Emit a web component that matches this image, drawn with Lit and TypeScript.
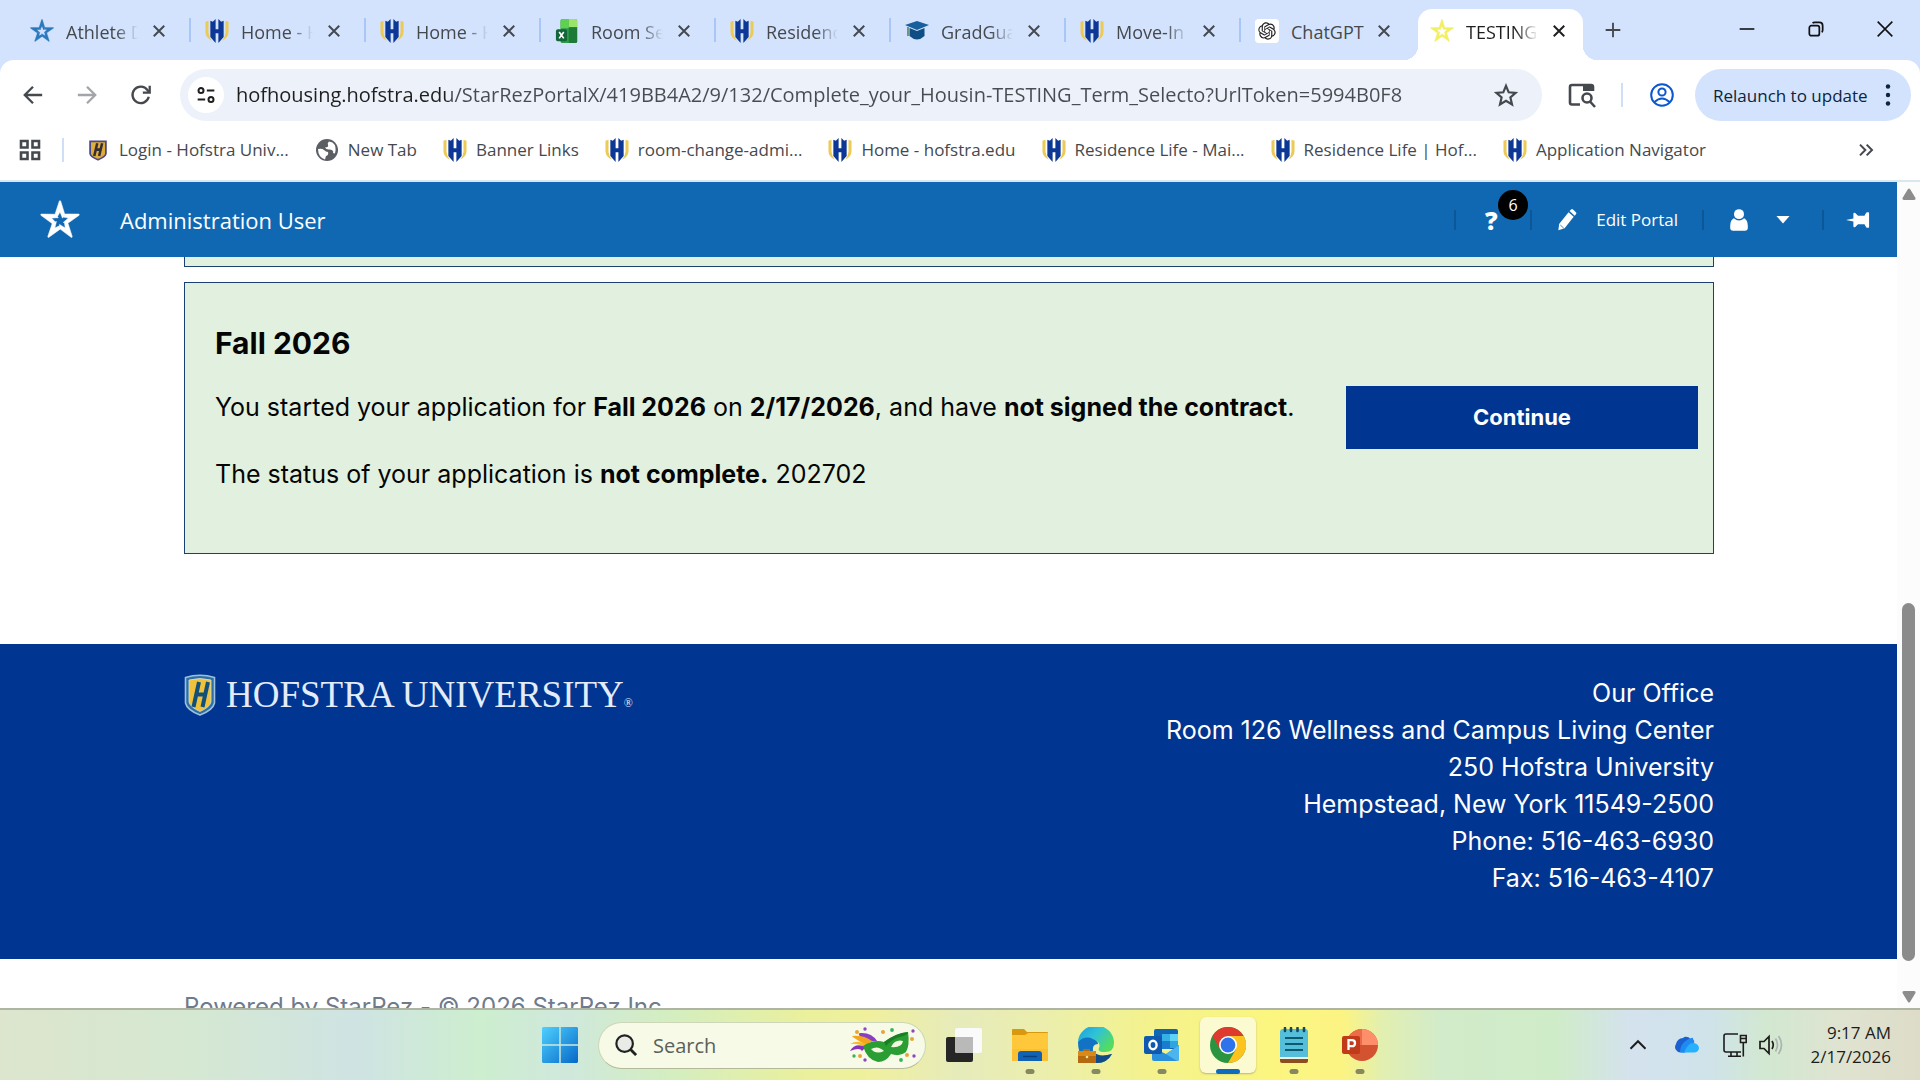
import { LitElement, html, css, svg, nothing, TemplateResult } from "lit";
import { customElement, property } from "lit/decorators.js";

/* ---------- icons ---------- */

const starArm = "M11.6 .6Q12 0 12.400 .6L14.900 8.700 13.500 10.900 12 7.200 10.500 9.900 9 8.500Z";
const star = svg`${[0, 72, 144, 216, 288].map(
  (a) => svg`<path d=${starArm} transform="rotate(${a} 12 12.5)"></path>`
)}`;

const icons: Record<string, () => TemplateResult> = {
  star: () => html`<svg viewBox="0 0 24 24" fill="currentColor" stroke="currentColor" stroke-width=".3">${star}</svg>`,
  hofstra: () => html`<svg viewBox="0 0 26 26">
    <path d="M.5 3 3.800 2V15Q4 19 7.500 23.500 .5 20 .5 14ZM25.500 3 22.200 2V15Q22 19 18.500 23.500 25.500 20 25.500 14Z" fill="#ecca58"></path>
    <path d="M5.800 2 8.500 3 11.500 0V11H14.500V0L17.500 3 20.200 2V19.500L14.500 26V15.500H11.500V26L5.800 19.500Z" fill="#0c3795"></path>
  </svg>`,
  excel: () => html`<svg viewBox="0 0 24 26">
    <rect x="5" y="0" width="18" height="26" rx="2" fill="#2f9a44"></rect>
    <path d="M7 0H14V10H5V2Q5 0 7 0Z" fill="#5fd152"></path><path d="M14 0H21Q23 0 23 2V9H14Z" fill="#9be46a"></path>
    <path d="M14 9H23V24Q23 26 21 26H14Z" fill="#1e7a39"></path>
    <rect x="0" y="11" width="12" height="13" rx="2" fill="#12663a"></rect>
    <path d="M3.5 14 8.5 21M8.5 14 3.5 21" stroke="#fff" stroke-width="1.8"></path>
  </svg>`,
  cap: () => html`<svg viewBox="0 0 24 24">
    <path d="M0 6 12 2 24 6 12 11Z" fill="#17609b"></path>
    <path d="M4.500 9V17Q12 24 19.500 17V9L12 12Z" fill="#0f4d85"></path>
    <path d="M3 8V17" stroke="#5d7f6b" stroke-width="1.600"></path>
  </svg>`,
  gpt: () => html`<svg viewBox="-4.500 -4.500 33 33">
    <rect x="-4.500" y="-4.500" width="33" height="33" rx="5" fill="#fff"></rect>
    <path fill="#222" d="M22.2819 9.8211a5.9847 5.9847 0 0 0-.5157-4.9108 6.0462 6.0462 0 0 0-6.5098-2.9A6.0651 6.0651 0 0 0 4.9807 4.1818a5.9847 5.9847 0 0 0-3.9977 2.9 6.0462 6.0462 0 0 0 .7427 7.0966 5.98 5.98 0 0 0 .511 4.9107 6.051 6.051 0 0 0 6.5146 2.9001A5.9847 5.9847 0 0 0 13.2599 24a6.0557 6.0557 0 0 0 5.7718-4.2058 5.9894 5.9894 0 0 0 3.9977-2.9001 6.0557 6.0557 0 0 0-.7475-7.0729zm-9.022 12.6081a4.4755 4.4755 0 0 1-2.8764-1.0408l.1419-.0804 4.7783-2.7582a.7948.7948 0 0 0 .3927-.6813v-6.7369l2.02 1.1686a.071.071 0 0 1 .038.052v5.5826a4.504 4.504 0 0 1-4.4945 4.4944zm-9.6607-4.1254a4.4708 4.4708 0 0 1-.5346-3.0137l.142.0852 4.783 2.7582a.7712.7712 0 0 0 .7806 0l5.8428-3.3685v2.3324a.0804.0804 0 0 1-.0332.0615L9.74 19.9502a4.4992 4.4992 0 0 1-6.1408-1.6464zM2.3408 7.8956a4.485 4.485 0 0 1 2.3655-1.9728V11.6a.7664.7664 0 0 0 .3879.6765l5.8144 3.3543-2.0201 1.1685a.0757.0757 0 0 1-.071 0l-4.8303-2.7865A4.504 4.504 0 0 1 2.3408 7.872zm16.5963 3.8558L13.1038 8.364 15.1192 7.2a.0757.0757 0 0 1 .071 0l4.8303 2.7913a4.4944 4.4944 0 0 1-.6765 8.1042v-5.6772a.79.79 0 0 0-.407-.667zm2.0107-3.0231l-.142-.0852-4.7735-2.7818a.7759.7759 0 0 0-.7854 0L9.409 9.2297V6.8974a.0662.0662 0 0 1 .0284-.0615l4.8303-2.7866a4.4992 4.4992 0 0 1 6.6802 4.66zM8.3065 12.863l-2.02-1.1638a.0804.0804 0 0 1-.038-.0567V6.0742a4.4992 4.4992 0 0 1 7.3757-3.4537l-.142.0805L8.704 5.459a.7948.7948 0 0 0-.3927.6813zm1.0976-2.3654l2.602-1.4998 2.6069 1.4998v2.9994l-2.5974 1.4997-2.6067-1.4997Z"></path>
  </svg>`,
  close: () => html`<svg viewBox="0 0 24 24" fill="none" stroke="currentColor" stroke-width="2.600"><path d="M5 5 19 19M19 5 5 19"></path></svg>`,
  plus: () => html`<svg viewBox="0 0 24 24" fill="none" stroke="currentColor" stroke-width="2.800"><path d="M12 1V23M1 12H23"></path></svg>`,
  minimise: () => html`<svg viewBox="0 0 24 24" fill="none" stroke="currentColor" stroke-width="2.400"><path d="M1 12H23"></path></svg>`,
  restore: () => html`<svg viewBox="0 0 24 24" fill="none" stroke="currentColor" stroke-width="2.600"><rect x="2" y="7" width="15" height="15" rx="3"></rect><path d="M7 3.500Q8 2 10 2H17Q22 2 22 7V14Q22 16 20.500 17"></path></svg>`,
  winClose: () => html`<svg viewBox="0 0 24 24" fill="none" stroke="currentColor" stroke-width="2.400"><path d="M1 1 23 23M23 1 1 23"></path></svg>`,
  back: () => html`<svg viewBox="0 0 24 24" fill="none" stroke="currentColor" stroke-width="2.500"><path d="M22 12H3M12 3 3 12 12 21"></path></svg>`,
  forward: () => html`<svg viewBox="0 0 24 24" fill="none" stroke="currentColor" stroke-width="2.500"><path d="M2 12H21M12 3 21 12 12 21"></path></svg>`,
  reload: () => html`<svg viewBox="0 0 24 24" fill="none" stroke="currentColor" stroke-width="2.500"><path d="M20.500 14A9 9 0 1 1 19 6.500L21 9"></path><path d="M21.500 2V9.500H14"></path></svg>`,
  tune: () => html`<svg viewBox="0 0 24 24" fill="none" stroke="currentColor" stroke-width="2.400"><circle cx="6" cy="6.500" r="3"></circle><path d="M13 6.500H22M2 17.500H11"></path><circle cx="18" cy="17.500" r="3"></circle></svg>`,
  bookmark: () => html`<svg viewBox="0 0 24 24" fill="none" stroke="currentColor" stroke-width="2.200"><path d="M12 2.800 14.700 9.300 21.700 9.900 16.400 14.500 18 21.400 12 17.700 6 21.400 7.600 14.500 2.300 9.900 9.300 9.300Z"></path></svg>`,
  pageSearch: () => html`<svg viewBox="0 0 28 26" fill="none" stroke="currentColor" stroke-width="2.600"><path d="M12 22.500H4Q2 22.500 2 20.500V5Q2 3 4 3H23Q25 3 25 5V9"></path><path d="M15 3H26V9H15Z" fill="currentColor" stroke="none"></path><circle cx="19" cy="16" r="4.500"></circle><path d="M22 19.500 27 25"></path></svg>`,
  profile: () => html`<svg viewBox="0 0 24 24" fill="none" stroke="currentColor" stroke-width="2"><circle cx="12" cy="12" r="10.800"></circle><circle cx="12" cy="9" r="3.600"></circle><path d="M4.500 19Q12 12 19.500 19"></path></svg>`,
  dots: () => html`<svg viewBox="0 0 6 24" fill="currentColor"><circle cx="3" cy="3.500" r="2.200"></circle><circle cx="3" cy="12" r="2.200"></circle><circle cx="3" cy="20.500" r="2.200"></circle></svg>`,
  apps: () => html`<svg viewBox="0 0 24 24" fill="none" stroke="currentColor" stroke-width="2.600"><path d="M3 3H9.500V9.500H3ZM14.500 3H21V9.500H14.500ZM3 14.500H9.500V21H3ZM14.500 14.500H21V21H14.500Z"></path></svg>`,
  shield: () => html`<svg viewBox="-2 -2 28 32">
    <path d="M1.500 2.500H22.500V19Q22 23 12 27 2 23 1.500 19Z" fill="#e0ae3a" stroke="#4b4a86" stroke-width="2.400"></path>
    <path d="M11 5 7 22M17.500 5 13.500 22M9 13.500H16" stroke="#352f35" stroke-width="3.400"></path>
  </svg>`,
  globe: () => html`<svg viewBox="0 0 24 24"><circle cx="12" cy="12" r="11" fill="#5b5f64"></circle>
    <path d="M3 11Q7 10 9 12T13 14Q14 17 11 18L10 21.500Q3 19 3 11ZM14 3.500Q12 5 13 7T10 9.500Q11 12 15 11.500 19 12 18 15L20 15.500Q22 8 17.500 4.500Z" fill="#fff"></path></svg>`,
  chevrons: () => html`<svg viewBox="0 0 24 24" fill="none" stroke="currentColor" stroke-width="3"><path d="M3 4 11 12 3 20M13 4 21 12 13 20"></path></svg>`,
  pencil: () => html`<svg viewBox="0 0 24 28" fill="currentColor"><path d="M1 27 2 19 14 4 20.500 10 9 24.500ZM15.300 2.600 17.200 .600Q18.500-.500 20 .800L23.300 4Q24.500 5.300 23.400 6.800L21.800 8.600Z"></path><path d="M3.500 20.500 8 24.500" stroke="#1168b2" stroke-width="1"></path></svg>`,
  user: () => html`<svg viewBox="0 0 24 30" fill="currentColor"><circle cx="12" cy="7" r="6.800"></circle><path d="M5 12.500Q12 19 19 12.500 24 15 24 23V26Q24 29.500 20 29.500H4Q0 29.500 0 26V23Q0 15 5 12.500Z"></path></svg>`,
  caret: () => html`<svg viewBox="0 0 16 10" fill="currentColor"><path d="M.500 .500H15.500L8 9Z"></path></svg>`,
  pin: () => html`<svg viewBox="0 0 26 20" fill="currentColor"><path d="M0 10 8 8.500V3.500Q8 1.500 10 2.500L13 5.500H20L22 2Q23.500 1 25 2V18Q23.500 19 22 18L20 14.500H13L10 17.500Q8 18.500 8 16.500V11.500Z"></path></svg>`,
  crest: () => html`<svg viewBox="0 0 32 42">
    <path d="M1.500 3.500Q16-1 30.500 3.500V29Q29 36 16 41 3 36 1.500 29Z" fill="#2d6fa3" stroke="#9cc0dd" stroke-width="1.600"></path>
    <path d="M5 6Q16 3 27 6V28Q26 33 16 37.500 6 33 5 28Z" fill="#f0c23c" stroke="#cfe0ea" stroke-width=".800"></path>
    <path d="M15 8 9.500 33M24 8 18.500 33M12 20.500H21.500" stroke="#12507c" stroke-width="4"></path>
  </svg>`,
  windows: () => html`<svg viewBox="0 0 35 35"><defs><linearGradient id="w" x1="0" y1="0" x2="1" y2="1"><stop offset="0" stop-color="#4fd0ff"></stop><stop offset="1" stop-color="#0669c8"></stop></linearGradient></defs>
    <path d="M1 0H16.800V16.800H0V1ZM18.200 0H34L35 1V16.800H18.200ZM0 18.200H16.800V35H1L0 34ZM18.200 18.200H35V34L34 35H18.200Z" fill="url(#w)"></path></svg>`,
  search: () => html`<svg viewBox="0 0 24 24" fill="#e8ebe6" stroke="#222" stroke-width="2.400"><circle cx="10.500" cy="10.500" r="9"></circle><path d="M17 17 23 23" stroke-width="3"></path></svg>`,
  mask: () => html`<svg viewBox="0 0 66 36">
    <path d="M16 15Q4 5 12 6 22 6 27 14Z" fill="#8a3fc0"></path><path d="M16 18Q2 10 2 9 14 8 22 14Z" fill="#f3a51d"></path>
    <path d="M18 18Q8 12 0 17 10 16 18 22Z" fill="#f7b92c"></path><path d="M16 20Q5 15 0 24 10 20 12 24Z" fill="#8a32bb"></path>
    <path d="M13 19Q24 12 34 15 46 6 58 5 60 18 56 25 50 30 41 27 36 35 28 35 17 33 13 19Z" fill="#2a9e33"></path>
    <path d="M34 15Q46 6 58 5 58 8 50 10 42 12 36 19Z" fill="#187f25"></path>
    <path d="M21 22Q28 18 34 24 26 28 21 22ZM41 20Q45 12 53 14 52 21 41 20Z" fill="#f4f7df"></path>
    <g fill="#8a49c0"><circle cx="15" cy="2" r="1.700"></circle><circle cx="63" cy="4" r="1.700"></circle><circle cx="15" cy="33" r="1.700"></circle><circle cx="64" cy="29" r="1.700"></circle></g>
    <g fill="#e9a33a"><circle cx="7" cy="5" r="2"></circle><circle cx="33" cy="5" r="2"></circle><circle cx="62" cy="12" r="2"></circle><circle cx="10" cy="29" r="2"></circle><circle cx="57" cy="28" r="2"></circle></g>
    <g fill="#37b35c"><circle cx="42" cy="3" r="1.900"></circle><circle cx="4" cy="29" r="1.700"></circle><circle cx="51" cy="33" r="1.900"></circle></g>
  </svg>`,
  taskView: () => html`<svg viewBox="0 0 36 36"><rect x="0" y="10" width="27" height="25" rx="2" fill="#262626"></rect><rect x="9" y="1" width="27" height="25" rx="2" fill="#fafafa"></rect><path d="M9 10H27V26H11Q9 26 9 24Z" fill="#b9b9b9"></path></svg>`,
  folder: () => html`<svg viewBox="0 0 36 36"><path d="M0 3Q0 2 1 2H12L15 5H35Q36 5 36 6V14H0Z" fill="#d9990e"></path><path d="M0 8H13L16 6H35Q36 6 36 7V34H0Z" fill="#ffc83a"></path><path d="M0 22H36V34H0Z" fill="#f7b52c" opacity=".5"></path><path d="M6 27Q6 24 9 24H27Q30 24 30 27V34H6Z" fill="#0f62b5"></path><path d="M11 29.500H25" stroke="#063e7e" stroke-width="1.400"></path></svg>`,
  edge: () => html`<svg viewBox="0 0 36 36"><defs><linearGradient id="e" x1="0" y1="0" x2="1" y2=".6"><stop offset="0" stop-color="#1c9ddb"></stop><stop offset=".5" stop-color="#2fc2d8"></stop><stop offset="1" stop-color="#54dd5c"></stop></linearGradient></defs>
    <path d="M0 15A18 17 0 0 1 36 16Q36 25 27 25 19 25 21 21 23 16 17 13 9 9 0 15Z" fill="url(#e)"></path>
    <path d="M0 15Q7 8 15 12 20 14 20 17 14 17 15 24 18 32 34 27 29 36 19 36 0 35 0 15Z" fill="#1273c4"></path>
    <path d="M15 24Q20 31 34 27 29 36 19 36H14Z" fill="#134b86"></path>
    <path d="M5 24V22H12V24H18V36H0V24Z" fill="#b66a10"></path><path d="M0 24H18V29H0Z" fill="#d98917"></path><circle cx="9" cy="30" r="1.300" fill="#ffe28a"></circle></svg>`,
  outlook: () => html`<svg viewBox="0 0 36 36"><path d="M10 4Q10 2 12 2H32Q34 2 34 4V22H10Z" fill="#1066b5"></path><path d="M18 7H26V14H18Z" fill="#35b1e6"></path><path d="M26 7H34V14H26Z" fill="#5cd3f7"></path><path d="M18 14H26V22H18Z" fill="#1a7ccc"></path><path d="M26 14H34V21H26Z" fill="#2ea4e0"></path>
    <path d="M8 20 22 27 35 18V32Q35 34 33 34H10Q8 34 8 32Z" fill="#2a90dc"></path><path d="M35 18V32Q35 34 33 34L22 27Z" fill="#4db5ee"></path>
    <rect x="0" y="9" width="18" height="18" rx="2" fill="#0f5ab0"></rect><ellipse cx="9" cy="18" rx="3.600" ry="4.200" fill="none" stroke="#fff" stroke-width="2.400"></ellipse></svg>`,
  chrome: () => html`<svg viewBox="0 0 36 36"><circle cx="18" cy="18" r="18" fill="#2b9440"></circle>
    <path d="M18 9H33.600A18 18 0 0 1 18 36L25.800 22.500Z" fill="#fcc31e"></path>
    <path d="M2.400 9A18 18 0 0 1 33.600 9H18L10.200 22.500Z" fill="#df3a2e"></path>
    <circle cx="18" cy="18" r="9" fill="#fff"></circle><circle cx="18" cy="18" r="7.400" fill="#2f73ec"></circle></svg>`,
  notepad: () => html`<svg viewBox="0 0 36 36"><path d="M4 30H32V34Q32 36 30 36H6Q4 36 4 34Z" fill="#8b4f1e"></path><path d="M4 29H32V32H4Z" fill="#f0f0ea"></path><path d="M4 5Q4 2 7 2H29Q32 2 32 5V30H4Z" fill="#54bedb"></path><path d="M9 11H27M9 17H27M9 23H27" stroke="#0c5a70" stroke-width="1.800"></path><path d="M9 1V4M15 1V4M21.500 1V4M28 1V4" stroke="#12495a" stroke-width="2.600" stroke-linecap="round"></path></svg>`,
  powerpoint: () => html`<svg viewBox="0 0 36 36"><circle cx="20" cy="18" r="16" fill="#d35230"></circle><path d="M20 2A16 16 0 0 1 36 18H20Z" fill="#ff8f6b"></path><path d="M20 2V18H4A16 16 0 0 1 20 2Z" fill="#ed6c47"></path><rect x="0" y="9" width="18" height="18" rx="2" fill="#c13b1b"></rect><path d="M6.500 23V13.200H10Q13 13.200 13 16.200T10 19.200H6.500" fill="none" stroke="#fff" stroke-width="2.300"></path></svg>`,
  up: () => html`<svg viewBox="0 0 24 24" fill="none" stroke="currentColor" stroke-width="2.600"><path d="M2 17 12 7 22 17"></path></svg>`,
  cloud: () => html`<svg viewBox="0 0 24 24"><path d="M6 19.500A5.500 5.500 0 0 1 1 11 7 7 0 0 1 8 5Q10 3 14 4.500L19 11 10 19.500Z" fill="#1b5fd0"></path><path d="M7 19.500Q6 15 10 11 15 7 19 10 24 11 24 15.500 23 19.500 19 19.500Z" fill="#27b0fb"></path><path d="M5 19Q5 11 12 7T18 6Q20 8 19 10 13 9 9 19.500Z" fill="#1f8bf0"></path></svg>`,
  network: () => html`<svg viewBox="0 0 24 24" fill="none" stroke="currentColor" stroke-width="1.600"><path d="M15 1H3Q1 1 1 3V17Q1 19 3 19H18M8 19V23M14 19V23M5 23.200H18"></path><path d="M17.500 2.500H23.200V9.500H17.500ZM17.500 5.500H23M20.300 9.500V23.500"></path></svg>`,
  speaker: () => html`<svg viewBox="0 0 24 24" fill="none" stroke="currentColor" stroke-width="1.700"><path d="M1 8.500H5L10 3.500V20.500L5 15.500H1Z"></path><path d="M13 8Q15.500 12 13 16"></path><path d="M16.500 5.500Q20.500 12 16.500 18.500M19.500 3Q25.500 12 19.500 21" stroke="#a9b3b0"></path></svg>`,
  triUp: () => html`<svg viewBox="0 0 14 12" fill="#8c8c8c"><path d="M6 1Q7 0 8 1L13.500 10Q14 12 12 12H2Q0 12 .500 10Z"></path></svg>`,
  triDown: () => html`<svg viewBox="0 0 14 12" fill="#8c8c8c"><path d="M6 11Q7 12 8 11L13.500 2Q14 0 12 0H2Q0 0 .500 2Z"></path></svg>`,
};

const shared = css`
  :host { box-sizing: border-box; font-family: "Open Sans", "Noto Sans", sans-serif; }
  * { box-sizing: border-box; }
  button, input {
    font: inherit; color: inherit; background: none; border: 0; padding: 0; margin: 0; outline: 0;
  }
  a { color: inherit; text-decoration: none; }
  svg { display: block; width: 100%; height: 100%; }
  .ico { display: block; flex: none; width: 24px; height: 24px; }
  .ico.s14 { width: 14px; height: 14px; }
  .ico.s16 { width: 16px; height: 16px; }
  .ico.s18 { width: 18px; height: 18px; }
  .ico.s20 { width: 20px; height: 20px; }
  .ico.s22 { width: 22px; height: 22px; }
  .ico.s28 { width: 28px; height: 28px; }
  .ico.s36 { width: 36px; height: 36px; }
  .ico.s40 { width: 40px; height: 40px; }
`;

const icon = (name: string, size = "") => html`<span class="ico ${size}" aria-hidden="true">${icons[name]()}</span>`;

/* ---------- browser chrome ---------- */

interface Tab { icon: string; title: string; tone?: string; active?: boolean; }

const tabs: Tab[] = [
  { icon: "star", title: "Athlete D", tone: "blue" },
  { icon: "hofstra", title: "Home - H" },
  { icon: "hofstra", title: "Home - H" },
  { icon: "excel", title: "Room Se" },
  { icon: "hofstra", title: "Residenc" },
  { icon: "cap", title: "GradGua" },
  { icon: "hofstra", title: "Move-In" },
  { icon: "gpt", title: "ChatGPT" },
  { icon: "star", title: "TESTING", tone: "yellow", active: true },
];

const bookmarks = [
  { icon: "shield", label: "Login - Hofstra Univ..." },
  { icon: "globe", label: "New Tab" },
  { icon: "hofstra", label: "Banner Links" },
  { icon: "hofstra", label: "room-change-admi..." },
  { icon: "hofstra", label: "Home - hofstra.edu" },
  { icon: "hofstra", label: "Residence Life - Mai..." },
  { icon: "hofstra", label: "Residence Life | Hof..." },
  { icon: "hofstra", label: "Application Navigator" },
];

@customElement("browser-chrome")
export class BrowserChrome extends LitElement {
  static styles = [shared, css`
    :host { display: block; background: #d3e3fd; color: #45494e; }
    .strip { display: flex; align-items: flex-start; height: 60px; padding-left: 14px; }
    .tabs { display: flex; }
    .tab {
      position: relative; display: flex; align-items: center;
      width: 175px; height: 51px; margin-top: 9px; padding: 0 0 8px 16px;
      font-size: 18px;
    }
    .tab:not(.active) + .tab:not(.active)::before {
      content: ""; position: absolute; left: 0; top: 9px; width: 2px; height: 24px; background: #a9c7f6;
    }
    .tab .blue { color: #2b78bd; }
    .tab .yellow { color: #f3ef62; }
    .title {
      width: 78px; margin: 2px 6px 0 12px; white-space: nowrap; text-align: left; line-height: 24px;
      -webkit-mask-image: linear-gradient(90deg, #000 50px, transparent 72px);
      mask-image: linear-gradient(90deg, #000 50px, transparent 72px);
    }
    .title.full { -webkit-mask-image: none; mask-image: none; }
    .active { color: #1f1f1f; }
    .active .face {
      position: absolute; inset: 0 6px 0 4px; background: #fff; border-radius: 14px 14px 0 0;
    }
    .active .face::before, .active .face::after {
      content: ""; position: absolute; bottom: 0; width: 14px; height: 14px;
    }
    .active .face::before { right: 100%; background: radial-gradient(circle at 0 0, #d3e3fd 14px, #fff 14px); }
    .active .face::after { left: 100%; background: radial-gradient(circle at 100% 0, #d3e3fd 14px, #fff 14px); }
    .active > :not(.face) { position: relative; }
    .new { margin: 22px 0 0 16px; }
    .window { display: flex; gap: 53px; margin: 21px 27px 0 auto; color: #111; }
    .toolbar {
      display: flex; align-items: center; height: 70px; padding: 0 9px 0 22px;
      background: #fff; border-radius: 14px 14px 0 0;
    }
    .nav { display: flex; gap: 32px; margin-right: 28px; }
    .nav .off { color: #a3a5a8; }
    .omni {
      flex: 1; display: flex; align-items: center; height: 52px; padding: 0 24px 0 8px;
      border-radius: 26px; background: #ecf1fa;
    }
    .site { display: grid; place-items: center; width: 36px; height: 36px; border-radius: 50%; background: #fff; color: #1f1f1f; margin-right: 12px; }
    .url {
      flex: 1; min-width: 0; font-size: 20px; line-height: 28px;
      background: linear-gradient(90deg, #1f1f1f 214px, #484c52 214px);
      -webkit-background-clip: text; background-clip: text; -webkit-text-fill-color: transparent;
    }
    .find { margin-left: 26px; }
    .rule { flex: none; width: 2px; height: 24px; background: #cfdff8; margin: 0 27px 0 25px; }
    .profile { color: #0b57d0; margin-right: 21px; }
    .update {
      display: flex; align-items: center; justify-content: space-between; width: 216px; height: 52px; padding: 0 20px 0 18px;
      border-radius: 26px; background: #d3e3fd; color: #0a2540; font-size: 17px; white-space: nowrap;
    }
    .update .ico { width: 6px; }
    .marks { display: flex; align-items: center; height: 50px; padding: 0 46px 10px 18px; background: #fff; font-size: 17px; }
    .marks .rule { margin: 0 22px 0 20px; }
    .list { display: flex; gap: 26px; }
    .mark { display: flex; align-items: center; gap: 9px; line-height: 24px; white-space: nowrap; }
    .more { margin-left: auto; }
    .edge { height: 2px; background: #d9e7ee; }
  `];

  render() {
    return html`
      <div class="strip">
        <div class="tabs" role="tablist">
          ${tabs.map((t) => html`
            <div class="tab ${t.active ? "active" : ""}">
              ${t.active ? html`<span class="face"></span>` : nothing}
              <span class=${t.tone ?? ""}>${icon(t.icon)}</span>
              <button class="title ${t.title === "ChatGPT" ? "full" : ""}" role="tab" aria-selected=${t.active ? "true" : "false"}>${t.title}</button>
              <button class="x" aria-label="Close tab">${icon("close", "s18")}</button>
            </div>`)}
        </div>
        <button class="new" aria-label="New tab">${icon("plus", "s16")}</button>
        <div class="window">
          <button aria-label="Minimise">${icon("minimise", "s16")}</button>
          <button aria-label="Restore">${icon("restore", "s16")}</button>
          <button aria-label="Close">${icon("winClose", "s16")}</button>
        </div>
      </div>
      <div class="toolbar">
        <nav class="nav">
          <button aria-label="Back">${icon("back", "s22")}</button>
          <button class="off" aria-label="Forward" disabled>${icon("forward", "s22")}</button>
          <button aria-label="Reload">${icon("reload", "s22")}</button>
        </nav>
        <div class="omni">
          <button class="site" aria-label="Site information">${icon("tune", "s20")}</button>
          <input class="url" type="text" aria-label="Address" spellcheck="false"
            value="hofhousing.hofstra.edu/StarRezPortalX/419BB4A2/9/132/Complete_your_Housin-TESTING_Term_Selecto?UrlToken=5994B0F8" />
          <button aria-label="Bookmark this page">${icon("bookmark")}</button>
        </div>
        <button class="find" aria-label="Search this page">${icon("pageSearch", "s28")}</button>
        <span class="rule"></span>
        <button class="profile" aria-label="Profile">${icon("profile")}</button>
        <button class="update">Relaunch to update ${icon("dots")}</button>
      </div>
      <div class="marks">
        <button aria-label="Apps">${icon("apps")}</button>
        <span class="rule"></span>
        <div class="list">
          ${bookmarks.map((b) => html`<a class="mark" href="#">${icon(b.icon)}${b.label}</a>`)}
        </div>
        <button class="more" aria-label="More bookmarks">${icon("chevrons", "s16")}</button>
      </div>
      <div class="edge"></div>
    `;
  }
}

/* ---------- portal page ---------- */

const office = [
  "Our Office",
  "Room 126 Wellness and Campus Living Center",
  "250 Hofstra University",
  "Hempstead, New York 11549-2500",
  "Phone: 516-463-6930",
  "Fax: 516-463-4107",
];

@customElement("portal-page")
export class PortalPage extends LitElement {
  static styles = [shared, css`
    :host { display: flex; min-height: 0; background: #fff; color: #050505; }
    .view { flex: 1; min-width: 0; overflow: hidden; }
    .admin {
      display: flex; align-items: center; height: 75px; padding: 0 27px 0 40px;
      background: #1168b2; color: #fff; font-size: 17px;
    }
    .who { margin-left: 40px; font-size: 22px; line-height: 32px; }
    .tools { display: flex; align-items: center; margin-left: auto; }
    .bar { width: 2px; height: 20px; background: #0d5796; }
    .help { position: relative; width: 74px; padding-right: 4px; font-size: 25px; line-height: 32px; font-weight: 800; }
    .badge {
      position: absolute; left: 42px; top: -14px; width: 30px; height: 30px; border-radius: 50%;
      background: #000; font-size: 16px; line-height: 30px; font-weight: 400; text-align: center;
    }
    .edit { display: flex; align-items: center; gap: 18px; padding: 0 24px; white-space: nowrap; }
    .account { display: flex; align-items: center; gap: 26px; padding: 0 32px 0 24px; }
    .stick { padding-left: 22px; }
    .wrap { padding: 0 183px 0 184px; font-family: Inter, "Open Sans", sans-serif; font-size: 25px; line-height: 36px; }
    .card { border: 1px solid #1b4173; background: #e2f1df; }
    .previous { height: 10px; border-top: 0; margin-bottom: 15px; }
    .term { display: flex; align-items: center; height: 272px; padding: 0 15px 0 30px; }
    .info { flex: 1; align-self: stretch; padding-top: 38px; }
    .info h2 { margin: 0 0 24px; font-size: 30px; line-height: 44px; font-weight: 700; }
    .info p { margin: 0 0 31px; white-space: nowrap; }
    .info b { font-weight: 700; }
    .go { width: 352px; height: 63px; background: #003591; color: #fff; font-size: 22px; font-weight: 700; margin-bottom: 2px; }
    footer { margin-top: 90px; height: 315px; background: #003591; color: #fff; }
    .foot { display: flex; justify-content: space-between; align-items: flex-start; padding-top: 30px; }
    .brand { display: flex; align-items: center; gap: 10px; font-family: "Liberation Serif", serif; font-size: 37px; line-height: 42px; white-space: nowrap; color: #e3ecf8; }
    .brand .ico { width: 32px; height: 42px; }
    .brand sup { font-size: 12px; line-height: 12px; vertical-align: baseline; }
    address { font-style: normal; text-align: right; line-height: 37px; padding-top: 1px; }
    .powered { padding-top: 30px; font-size: 24px; color: #6f7a8c; }
    .scroll { display: flex; flex-direction: column; align-items: center; flex: none; width: 23px; padding: 6px 0 5px; background: #fcfcfc; }
    .scroll .ico { width: 14px; height: 12px; }
    .track { flex: 1; width: 13px; display: flex; flex-direction: column; justify-content: flex-end; padding-bottom: 30px; }
    .thumb { height: 47%; border-radius: 7px; background: #8b8b8b; }
  `];

  render() {
    return html`
      <div class="view">
        <header class="admin">
          ${icon("star", "s40")}
          <span class="who">Administration User</span>
          <div class="tools">
            <span class="bar"></span>
            <button class="help" aria-label="Help, 6 items">?<span class="badge">6</span></button>
            <span class="bar"></span>
            <button class="edit">${icon("pencil", "s22")}Edit Portal</button>
            <span class="bar"></span>
            <button class="account" aria-label="Account">${icon("user", "s22")}${icon("caret", "s14")}</button>
            <span class="bar"></span>
            <button class="stick" aria-label="Pin">${icon("pin")}</button>
          </div>
        </header>
        <main class="wrap">
          <section class="card previous"></section>
          <section class="card term">
            <div class="info">
              <h2>Fall 2026</h2>
              <p>You started your application for <b>Fall 2026</b> on <b>2/17/2026</b>, and have <b>not signed the contract</b>.</p>
              <p>The status of your application is <b>not complete.</b> 202702</p>
            </div>
            <button class="go">Continue</button>
          </section>
        </main>
        <footer>
          <div class="wrap foot">
            <a class="brand" href="#">${icon("crest")}<span>HOFSTRA UNIVERSITY<sup>®</sup></span></a>
            <address>${office.map((line) => html`<div>${line}</div>`)}</address>
          </div>
        </footer>
        <div class="wrap powered">Powered by StarRez - © 2026 StarRez Inc.</div>
      </div>
      <div class="scroll" aria-hidden="true">
        ${icon("triUp")}
        <div class="track"><div class="thumb"></div></div>
        ${icon("triDown")}
      </div>
    `;
  }
}

/* ---------- desktop taskbar ---------- */

const apps = [
  { icon: "taskView", label: "Task view", state: "" },
  { icon: "folder", label: "File Explorer", state: "open" },
  { icon: "edge", label: "Edge", state: "open" },
  { icon: "outlook", label: "Outlook", state: "open" },
  { icon: "chrome", label: "Chrome", state: "open current" },
  { icon: "notepad", label: "Notepad", state: "open" },
  { icon: "powerpoint", label: "PowerPoint", state: "open" },
];

@customElement("task-bar")
export class TaskBar extends LitElement {
  @property() time = "9:17 AM";
  @property() date = "2/17/2026";

  static styles = [shared, css`
    :host {
      display: grid; grid-template-columns: 1fr auto 1fr; align-items: center; height: 72px;
      border-top: 2px solid #aeb5a2; color: #1c1c1c;
      background: linear-gradient(90deg, #dde5cd 0%, #d5e8d2 10%, #cfe3e3 18.500%, #cdeecf 25%, #cfe8dc 29.500%,
        #d4eec0 35%, #eaf09c 42%, #f0f09c 45%, #e6ebbb 50%, #ecefaa 55%, #f4f28c 60%, #fbf680 66%,
        #fbf484 70%, #e2efb0 72%, #d2ebca 75%, #cfecc8 81%, #d4e2ee 85%, #cfe3ea 89%, #d2e8d0 92%, #dfe3d0 96%, #dddcc8 100%);
    }
    .middle { grid-column: 2; display: flex; align-items: center; }
    .slot { display: grid; place-items: center; position: relative; width: 66px; height: 56px; }
    .open::after {
      content: ""; position: absolute; left: 50%; bottom: -1px; width: 9px; height: 5px;
      transform: translateX(-50%); border-radius: 3px; background: #868862;
    }
    .current::before { content: ""; position: absolute; inset: 0 5px; border-radius: 6px; background: #fcfad0; box-shadow: 0 1px 2px #b9b77a; }
    .current::after { width: 24px; background: #0f6cbd; }
    .slot .ico { position: relative; }
    .search {
      display: flex; align-items: center; gap: 16px; width: 328px; height: 47px; margin: 0 5px; padding: 0 9px 0 16px;
      border-radius: 24px; border: 1px solid #cdd6b8; border-bottom-color: #b4b99a; background: #f6fae7; font-size: 20px;
    }
    .search input { flex: 1; min-width: 0; }
    .search input::placeholder { color: #5c5f5a; opacity: 1; }
    .search .mask { width: 66px; height: 36px; }
    .search .mask .ico { width: 66px; height: 36px; }
    .tray { grid-column: 3; justify-self: end; display: flex; align-items: center; padding-right: 29px; }
    .chev { margin-right: 28px; }
    .cloud { margin-right: 24px; }
    .net { margin-right: 12px; }
    time { margin-left: 27px; font-size: 17px; line-height: 24px; text-align: right; }
  `];

  render() {
    return html`
      <div class="middle">
        <button class="slot" aria-label="Start">${icon("windows", "s36")}</button>
        <label class="search">
          ${icon("search", "s22")}
          <input type="search" placeholder="Search" aria-label="Search" />
          <span class="mask">${icon("mask")}</span>
        </label>
        ${apps.map((a) => html`<button class="slot ${a.state}" aria-label=${a.label}>${icon(a.icon, "s36")}</button>`)}
      </div>
      <div class="tray">
        <button class="chev" aria-label="Show hidden icons">${icon("up", "s18")}</button>
        <button class="cloud" aria-label="OneDrive">${icon("cloud")}</button>
        <button class="net" aria-label="Network">${icon("network")}</button>
        <button aria-label="Volume">${icon("speaker")}</button>
        <time><div>${this.time}</div><div>${this.date}</div></time>
      </div>
    `;
  }
}

@customElement("app-root")
export class AppRoot extends LitElement {
  static styles = css`
    :host { display: flex; flex-direction: column; height: 100vh; overflow: hidden; }
    portal-page { flex: 1; }
    browser-chrome, task-bar { flex: none; }
  `;

  render() {
    return html`
      <browser-chrome></browser-chrome>
      <portal-page></portal-page>
      <task-bar></task-bar>
    `;
  }
}
